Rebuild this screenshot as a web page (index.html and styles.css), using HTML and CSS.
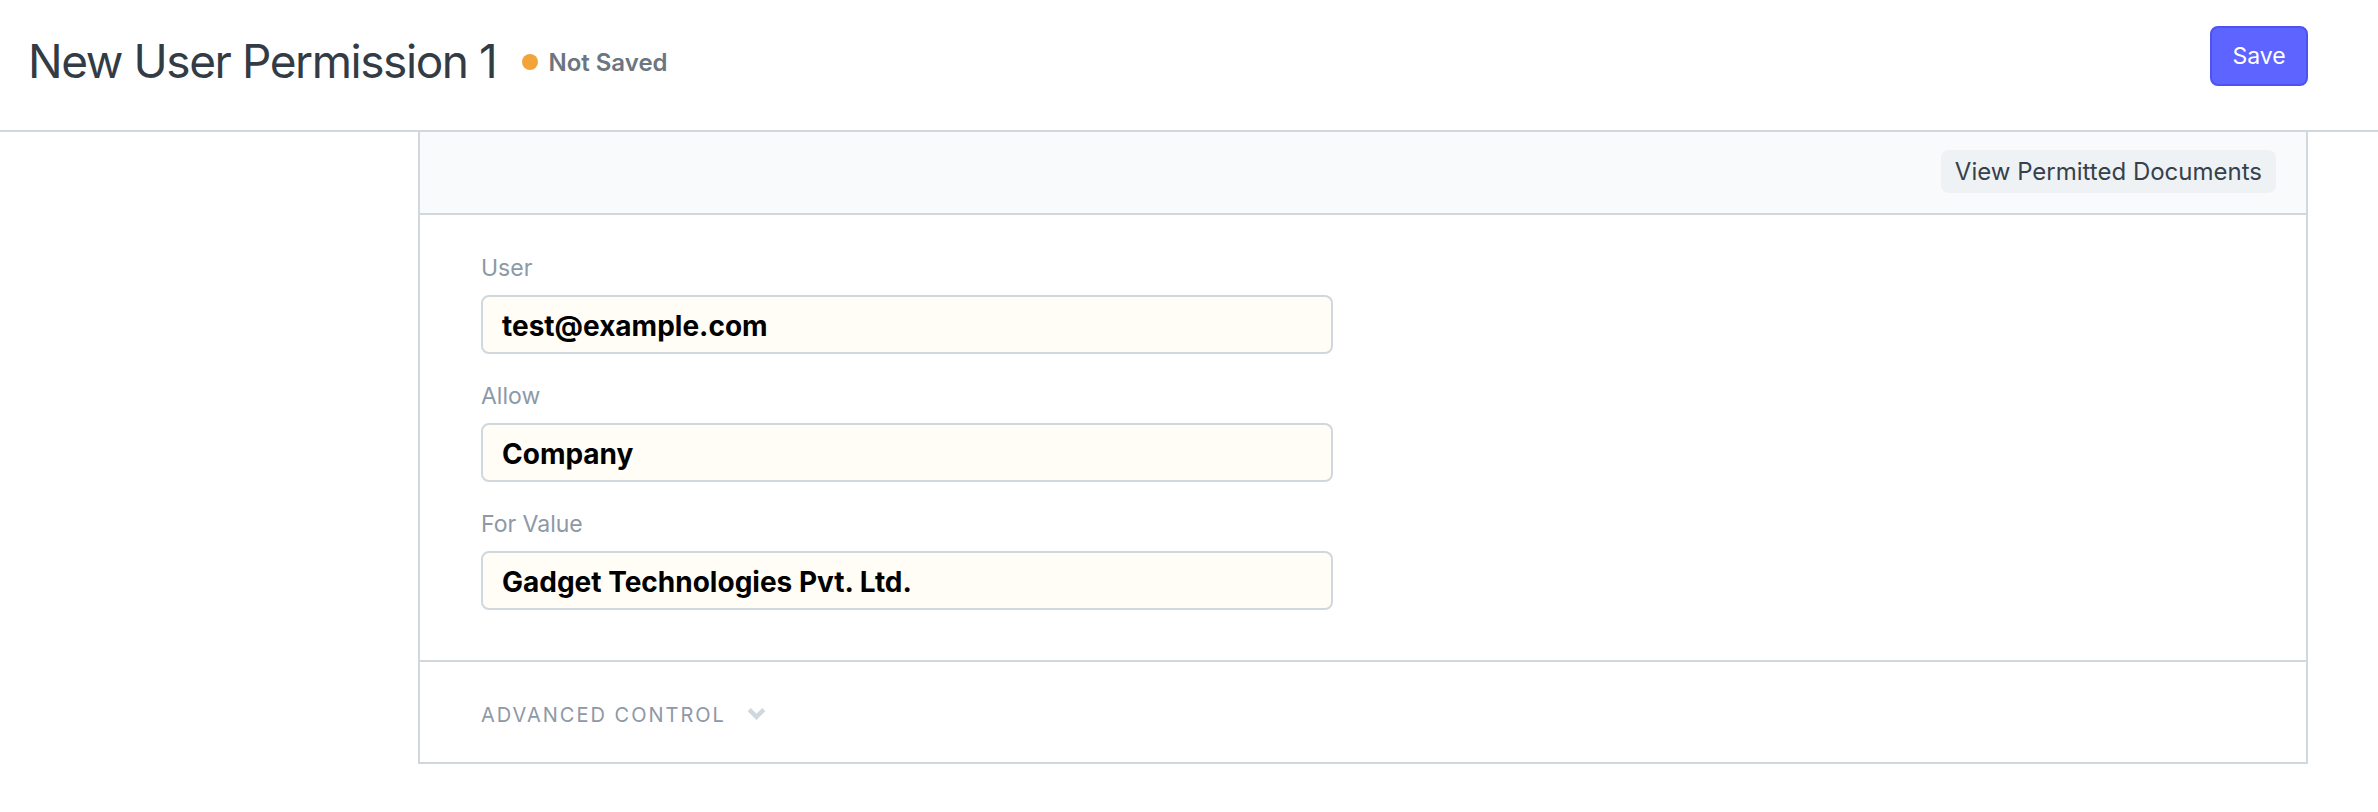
FILE: index.html
```html
<!DOCTYPE html>
<html lang="en">
<head>
<meta charset="utf-8">
<title>New User Permission 1</title>
<link rel="stylesheet" href="styles.css">
</head>
<body>
<header class="page-head">
  <div class="title-group">
    <h1 class="page-title">New User Permission 1</h1>
    <span class="indicator"><span class="dot"></span>Not Saved</span>
  </div>
  <button class="btn-primary" type="button">Save</button>
</header>
<main class="layout">
  <aside class="sidebar"></aside>
  <section class="form-card">
    <div class="form-toolbar">
      <button class="btn-default" type="button">View Permitted Documents</button>
    </div>
    <div class="form-body">
      <div class="form-column">
        <div class="field">
          <label class="field-label">User</label>
          <div class="field-input">test@example.com</div>
        </div>
        <div class="field">
          <label class="field-label">Allow</label>
          <div class="field-input">Company</div>
        </div>
        <div class="field">
          <label class="field-label">For Value</label>
          <div class="field-input">Gadget Technologies Pvt. Ltd.</div>
        </div>
      </div>
      <div class="form-column"></div>
    </div>
    <div class="section-collapsed">
      <span class="section-title">Advanced Control</span>
      <svg class="chevron" width="19" height="13" viewBox="0 0 19 13" aria-hidden="true">
        <polyline points="2.2,2.6 9.5,9.8 16.8,2.6" fill="none" stroke="#d1d8dd" stroke-width="4.4" stroke-linejoin="miter"/>
      </svg>
    </div>
  </section>
</main>
</body>
</html>
```
FILE: styles.css
```css
* { box-sizing: border-box; }

body {
  margin: 0;
  background: #ffffff;
  font-family: Inter, "Noto Sans", "Liberation Sans", sans-serif;
  color: #36414c;
}

.page-head {
  height: 132px;
  display: flex;
  align-items: center;
  justify-content: space-between;
  padding: 0 70px 8px 28px;
  border-bottom: 2px solid #d1d8dd;
}

.title-group {
  display: flex;
  align-items: center;
}

.page-title {
  margin: 0;
  font-size: 46px;
  line-height: 46px;
  font-weight: 400;
  letter-spacing: -0.031em;
  color: #333c45;
}

.indicator {
  display: flex;
  align-items: center;
  margin-left: 26px;
  font-size: 24px;
  font-weight: 600;
  color: #6c7680;
  padding-top: 2px;
}

.dot {
  width: 16px;
  height: 16px;
  border-radius: 50%;
  background: #f2a43a;
  margin-right: 10px;
}

.btn-primary {
  margin-bottom: 10px;
  height: 60px;
  width: 98px;
  padding: 0;
  border: 2px solid #4d53f2;
  border-radius: 8px;
  background: #5e64ff;
  color: #ffffff;
  font-family: inherit;
  font-size: 23px;
  font-weight: 400;
}

.layout {
  display: flex;
  padding-right: 70px;
}

.sidebar {
  flex: none;
  width: 418px;
}

.form-card {
  flex: 1;
  border: 2px solid #d1d8dd;
  border-top: none;
}

.form-toolbar {
  height: 83px;
  display: flex;
  align-items: center;
  justify-content: flex-end;
  padding: 0 30px 2px;
  background: #f9fafb;
  border-bottom: 2px solid #d1d8dd;
}

.btn-default {
  height: 43px;
  padding: 0 14px;
  border: none;
  border-radius: 8px;
  background: #eff2f5;
  color: #36414c;
  font-family: inherit;
  font-size: 24px;
  font-weight: 400;
}

.form-body {
  display: grid;
  grid-template-columns: 1fr 1fr;
  column-gap: 60px;
  padding: 37px 61px 24px;
  border-bottom: 2px solid #d1d8dd;
}

.field {
  margin-bottom: 26px;
}

.field-label {
  display: block;
  font-size: 23px;
  line-height: 33px;
  color: #8d99a6;
  margin-bottom: 10px;
}

.field-input {
  height: 59px;
  padding: 4px 19px 0;
  border: 2px solid #d1d8dd;
  border-radius: 8px;
  background: #fffdf5;
  font-size: 28px;
  line-height: 51px;
  font-weight: 700;
  color: #000000;
}

.section-collapsed {
  height: 100px;
  display: flex;
  align-items: center;
  padding: 5px 61px 0;
}

.section-title {
  font-size: 20px;
  letter-spacing: 0.1em;
  text-transform: uppercase;
  color: #8d99a6;
}

.chevron {
  margin-left: 21px;
  margin-bottom: 3px;
}
```
